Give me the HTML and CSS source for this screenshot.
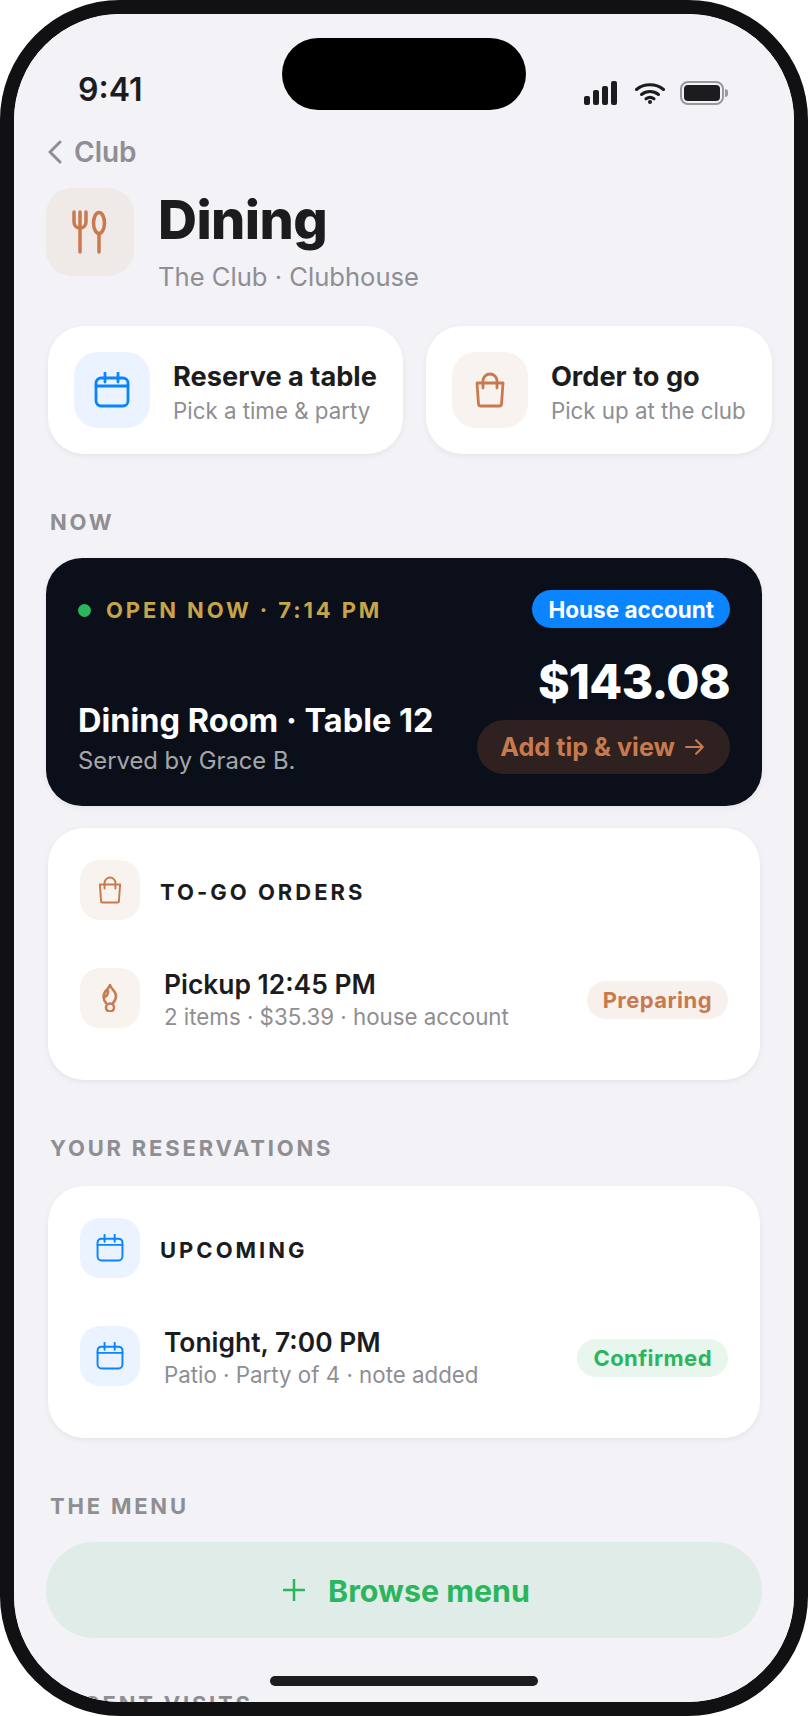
FILE: index.html
```html
<!DOCTYPE html>
<html lang="en">
<head>
    <meta charset="UTF-8">
    <meta name="viewport" content="width=device-width, initial-scale=1.0">
    <title>Dining</title>
    <link rel="stylesheet" href="styles.css">
</head>
<body>
    <div class="phone">
        <div class="screen">
            <div class="island"></div>

            <div class="status">
                <span class="time">9:41</span>
                <div class="status-icons">
                    <svg class="signal" width="33" height="24" viewBox="0 0 33 24">
                        <rect x="0" y="15" width="6" height="9" rx="2"/>
                        <rect x="9" y="9" width="6" height="15" rx="2"/>
                        <rect x="18" y="5" width="6" height="19" rx="2"/>
                        <rect x="27" y="0" width="6" height="24" rx="2"/>
                    </svg>
                    <svg class="wifi" width="30" height="22" viewBox="0 0 30 22">
                        <path d="M1.5 7.5C9 1.2 21 1.2 28.500 7.500"/>
                        <path d="M6.500 12.500C11.500 8.500 18.500 8.500 23.500 12.500"/>
                        <path d="M11 16.800C13.500 15 16.500 15 19 16.800"/>
                        <circle cx="15" cy="20" r="2"/>
                    </svg>
                    <div class="battery"><div class="battery-fill"></div></div>
                </div>
            </div>

            <div class="back">
                <svg width="14" height="24" viewBox="0 0 14 24"><path d="M12 2L2 12l10 10"/></svg>
                <span>Club</span>
            </div>

            <div class="page-head">
                <div class="head-tile">
                    <svg width="44" height="44" viewBox="0 0 44 44">
                        <path d="M6 2v10c0 4 3 6 6 6s6-2 6-6V2"/>
                        <path d="M12 2v40"/>
                        <ellipse cx="31" cy="13" rx="5.500" ry="10.500"/>
                        <path d="M31 24v18"/>
                    </svg>
                </div>
                <div class="head-text">
                    <h1>Dining</h1>
                    <p>The Club · Clubhouse</p>
                </div>
            </div>

            <div class="quick-row">
                <div class="quick-card">
                    <div class="tile tile-lg tile-blue">
                        <svg width="36" height="36" viewBox="0 0 36 36">
                            <rect x="2" y="6" width="32" height="28" rx="5"/>
                            <path d="M2 14h32M11 1v9M24 1v9"/>
                        </svg>
                    </div>
                    <div class="quick-text">
                        <div class="quick-title">Reserve a table</div>
                        <div class="quick-sub">Pick a time &amp; party</div>
                    </div>
                </div>
                <div class="quick-card">
                    <div class="tile tile-lg tile-copper">
                        <svg width="36" height="36" viewBox="0 0 36 36">
                            <path d="M5 11h26l-1.500 21a2 2 0 0 1-2 2h-19a2 2 0 0 1-2-2z"/>
                            <path d="M11 16V9a7 7 0 0 1 14 0v7"/>
                        </svg>
                    </div>
                    <div class="quick-text">
                        <div class="quick-title">Order to go</div>
                        <div class="quick-sub">Pick up at the club</div>
                    </div>
                </div>
            </div>

            <div class="section-label">NOW</div>

            <div class="now-card">
                <div class="now-top">
                    <div class="now-status">
                        <span class="dot"></span>
                        <span>OPEN NOW · 7:14 PM</span>
                    </div>
                    <span class="account-pill">House account</span>
                </div>
                <div class="now-bottom">
                    <div class="now-left">
                        <div class="now-title">Dining Room · Table 12</div>
                        <div class="now-sub">Served by Grace B.</div>
                    </div>
                    <div class="now-right">
                        <div class="amount">$143.08</div>
                        <div class="tip-btn">
                            Add tip &amp; view
                            <svg width="20" height="20" viewBox="0 0 18 18"><path d="M1 9h15M10 3l6 6-6 6"/></svg>
                        </div>
                    </div>
                </div>
            </div>

            <div class="card card-first">
                <div class="card-head">
                    <div class="tile tile-copper">
                        <svg width="28" height="28" viewBox="0 0 36 36">
                            <path d="M5 11h26l-1.500 21a2 2 0 0 1-2 2h-19a2 2 0 0 1-2-2z"/>
                            <path d="M11 16V9a7 7 0 0 1 14 0v7"/>
                        </svg>
                    </div>
                    <span class="card-head-text">TO-GO ORDERS</span>
                </div>
                <div class="card-row">
                    <div class="tile tile-copper">
                        <svg width="28" height="28" viewBox="0 0 28 28">
                            <path d="M14 1c1 4 6 6 6 11 0 3-1 5-3 7M14 1c-.5 3-3 4-5 7-2 3-2 8 1 11"/>
                            <path d="M9 13c2-1 3-3 3-6"/>
                            <circle cx="14" cy="23.500" r="4"/>
                        </svg>
                    </div>
                    <div class="row-text">
                        <div class="row-title">Pickup 12:45 PM</div>
                        <div class="row-sub">2 items · $35.39 · house account</div>
                    </div>
                    <span class="badge badge-copper">Preparing</span>
                </div>
            </div>

            <div class="section-label">YOUR RESERVATIONS</div>

            <div class="card">
                <div class="card-head">
                    <div class="tile tile-blue">
                        <svg width="28" height="28" viewBox="0 0 36 36">
                            <rect x="2" y="6" width="32" height="28" rx="5"/>
                            <path d="M2 14h32M11 1v9M24 1v9"/>
                        </svg>
                    </div>
                    <span class="card-head-text">UPCOMING</span>
                </div>
                <div class="card-row">
                    <div class="tile tile-blue">
                        <svg width="28" height="28" viewBox="0 0 36 36">
                            <rect x="2" y="6" width="32" height="28" rx="5"/>
                            <path d="M2 14h32M11 1v9M24 1v9"/>
                        </svg>
                    </div>
                    <div class="row-text">
                        <div class="row-title">Tonight, 7:00 PM</div>
                        <div class="row-sub">Patio · Party of 4 · note added</div>
                    </div>
                    <span class="badge badge-green">Confirmed</span>
                </div>
            </div>

            <div class="section-label">THE MENU</div>

            <div class="menu-btn">
                <svg width="22" height="22" viewBox="0 0 22 22"><path d="M11 0v22M0 11h22"/></svg>
                <span>Browse menu</span>
            </div>

            <div class="section-label">RECENT VISITS</div>

            <div class="home-bar"></div>
        </div>
    </div>
</body>
</html>
```

FILE: styles.css
```css
* {
    box-sizing: border-box;
}
body {
    font-family: Inter, "Liberation Sans", sans-serif;
    background-color: #fff;
    margin: 0;
}
.phone {
    width: 808px;
    height: 1716px;
    border: 14px solid #111113;
    border-radius: 120px;
    overflow: hidden;
}
.screen {
    position: relative;
    height: 100%;
    background-color: #f2f2f7;
    border-radius: 106px;
    overflow: hidden;
    padding: 54px 32px 0;
    color: #1c1c1e;
}
.island {
    position: absolute;
    top: 24px;
    left: 268px;
    width: 244px;
    height: 72px;
    border-radius: 36px;
    background-color: #000;
}
.status {
    height: 44px;
    display: flex;
    justify-content: space-between;
    align-items: center;
    padding-left: 32px;
}
.time {
    font-size: 32px;
    font-weight: 600;
    margin-top: -2px;
}
.status-icons {
    display: flex;
    align-items: center;
    gap: 18px;
    margin-right: 38px;
    padding-top: 6px;
}
.signal {
    fill: #1c1c1e;
}
.wifi {
    fill: #1c1c1e;
    margin-right: -3px;
}
.wifi path {
    fill: none;
    stroke: #1c1c1e;
    stroke-width: 3;
    stroke-linecap: round;
}
.battery {
    position: relative;
    width: 44px;
    height: 24px;
    border: 2px solid #98989e;
    border-radius: 8px;
    padding: 2px;
}
.battery::after {
    content: "";
    position: absolute;
    right: -6px;
    top: 6px;
    width: 3px;
    height: 8px;
    border-radius: 0 3px 3px 0;
    background-color: #98989e;
}
.battery-fill {
    height: 100%;
    border-radius: 4px;
    background-color: #1c1c1e;
}
.back {
    display: flex;
    align-items: center;
    gap: 12px;
    height: 34px;
    margin-top: 23px;
    margin-bottom: 19px;
    padding-left: 2px;
    font-size: 28px;
    font-weight: 600;
    color: #8e8e93;
}
.back svg path {
    fill: none;
    stroke: #8e8e93;
    stroke-width: 3;
    stroke-linecap: round;
    stroke-linejoin: round;
}
.page-head {
    display: flex;
    gap: 24px;
}
.head-tile {
    width: 88px;
    height: 88px;
    flex: none;
    display: flex;
    align-items: center;
    justify-content: center;
    border-radius: 26px;
    background-color: #efe9e7;
}
.head-tile svg {
    fill: none;
    stroke: #c87a4e;
    stroke-width: 3.500;
    stroke-linecap: round;
}
.head-text {
    padding-top: 2px;
}
.head-text h1 {
    margin: 0;
    font-size: 54px;
    line-height: 60px;
    font-weight: 800;
    letter-spacing: -0.600px;
}
.head-text p {
    margin: 11px 0 0;
    font-size: 25.600px;
    line-height: 32px;
    color: #8e8e93;
}
.quick-row {
    display: flex;
    gap: 23px;
    margin: 33px 0 0 2px;
}
.quick-card {
    flex: none;
    display: flex;
    align-items: center;
    gap: 23px;
    padding: 26px;
    border-radius: 36px;
    background-color: #fff;
    box-shadow: 0 2px 6px rgba(0, 0, 0, 0.06);
}
.quick-text {
    padding-top: 6px;
}
.quick-title {
    font-size: 27.200px;
    line-height: 34px;
    font-weight: 700;
}
.quick-sub {
    font-size: 22.300px;
    line-height: 30px;
    margin-top: 2px;
    color: #8e8e93;
}
.tile {
    width: 60px;
    height: 60px;
    flex: none;
    display: flex;
    align-items: center;
    justify-content: center;
    border-radius: 20px;
}
.tile svg {
    fill: none;
    stroke-width: 2.500;
    stroke-linecap: round;
    stroke-linejoin: round;
}
.tile-lg {
    width: 76px;
    height: 76px;
    border-radius: 24px;
}
.tile-lg svg {
    stroke-width: 2.800;
}
.tile-blue {
    background-color: #eaf3ff;
}
.tile-blue svg {
    stroke: #0a84ff;
}
.tile-copper {
    background-color: #f8f3ef;
}
.tile-copper svg {
    stroke: #c87a4e;
}
.section-label {
    margin: 54px 0 22px 4px;
    font-size: 22px;
    line-height: 28px;
    font-weight: 700;
    letter-spacing: 2.800px;
    color: #8e8e93;
}
.menu-btn + .section-label {
    margin-top: 52px;
}
.now-card {
    height: 248px;
    padding: 32px;
    border-radius: 36px;
    background-color: #0b0f19;
    color: #fff;
    box-shadow: 0 2px 6px rgba(0, 0, 0, 0.06);
}
.now-top {
    display: flex;
    justify-content: space-between;
    align-items: center;
}
.now-status {
    display: flex;
    align-items: center;
    gap: 15px;
    padding-top: 2px;
    font-size: 22px;
    font-weight: 700;
    letter-spacing: 2.900px;
    color: #c8a449;
}
.dot {
    width: 13px;
    height: 13px;
    border-radius: 50%;
    background-color: #2bb65e;
}
.account-pill {
    height: 38px;
    padding: 1px 16px 0;
    border-radius: 19px;
    background-color: #0a84ff;
    font-size: 22.500px;
    line-height: 38px;
    font-weight: 700;
}
.now-bottom {
    display: flex;
    justify-content: space-between;
    align-items: flex-end;
    margin-top: 24px;
}
.now-left {
    margin-bottom: -2px;
}
.now-title {
    font-size: 32.500px;
    line-height: 40px;
    font-weight: 700;
}
.now-sub {
    margin-top: 5px;
    font-size: 23.800px;
    line-height: 30px;
    color: rgba(255, 255, 255, 0.65);
}
.now-right {
    display: flex;
    flex-direction: column;
    align-items: flex-end;
}
.amount {
    font-size: 48px;
    line-height: 56px;
    font-weight: 800;
    letter-spacing: -0.700px;
    padding-top: 2px;
    margin-bottom: 10px;
}
.tip-btn {
    display: flex;
    align-items: center;
    gap: 10px;
    height: 54px;
    padding: 0 25px 0 23px;
    border-radius: 27px;
    background-color: #2e211f;
    color: #c87a4e;
    font-size: 25.200px;
    font-weight: 700;
}
.tip-btn svg path {
    fill: none;
    stroke: #c87a4e;
    stroke-width: 2;
    stroke-linecap: round;
    stroke-linejoin: round;
}
.card {
    height: 252px;
    margin: 24px 2px 0;
    padding: 32px;
    border-radius: 36px;
    background-color: #fff;
    box-shadow: 0 2px 6px rgba(0, 0, 0, 0.06);
}
.card-first {
    margin-top: 22px;
}
.card-head {
    display: flex;
    align-items: center;
    gap: 20px;
    font-size: 22px;
    font-weight: 700;
    letter-spacing: 3px;
}
.card-head-text {
    padding-top: 4px;
}
.card-row {
    display: flex;
    align-items: center;
    gap: 24px;
    margin-top: 48px;
}
.row-text {
    flex: 1;
    height: 60px;
}
.row-title {
    font-size: 26.400px;
    line-height: 32px;
    font-weight: 600;
}
.row-sub {
    font-size: 22.300px;
    line-height: 28px;
    margin-top: 3px;
    color: #8e8e93;
}
.badge {
    height: 38px;
    padding: 0 16px;
    border-radius: 19px;
    font-size: 22px;
    line-height: 38px;
    font-weight: 700;
    letter-spacing: 0.450px;
    margin-top: 4px;
}
.badge-copper {
    background-color: #f8f0ec;
    color: #c87a4e;
}
.badge-green {
    background-color: #e8f6ee;
    color: #2bb65e;
}
.menu-btn {
    display: flex;
    align-items: center;
    justify-content: center;
    gap: 23px;
    height: 96px;
    padding-left: 5px;
    border-radius: 48px;
    background-color: #e0ece7;
    color: #2bb65e;
    font-size: 30.400px;
    font-weight: 700;
}
.menu-btn span {
    padding-top: 2px;
}
.menu-btn svg path {
    fill: none;
    stroke: #2bb65e;
    stroke-width: 2.500;
    stroke-linecap: round;
}
.home-bar {
    position: absolute;
    left: 256px;
    bottom: 16px;
    width: 268px;
    height: 10px;
    border-radius: 5px;
    background-color: #1c1c1e;
}
```
